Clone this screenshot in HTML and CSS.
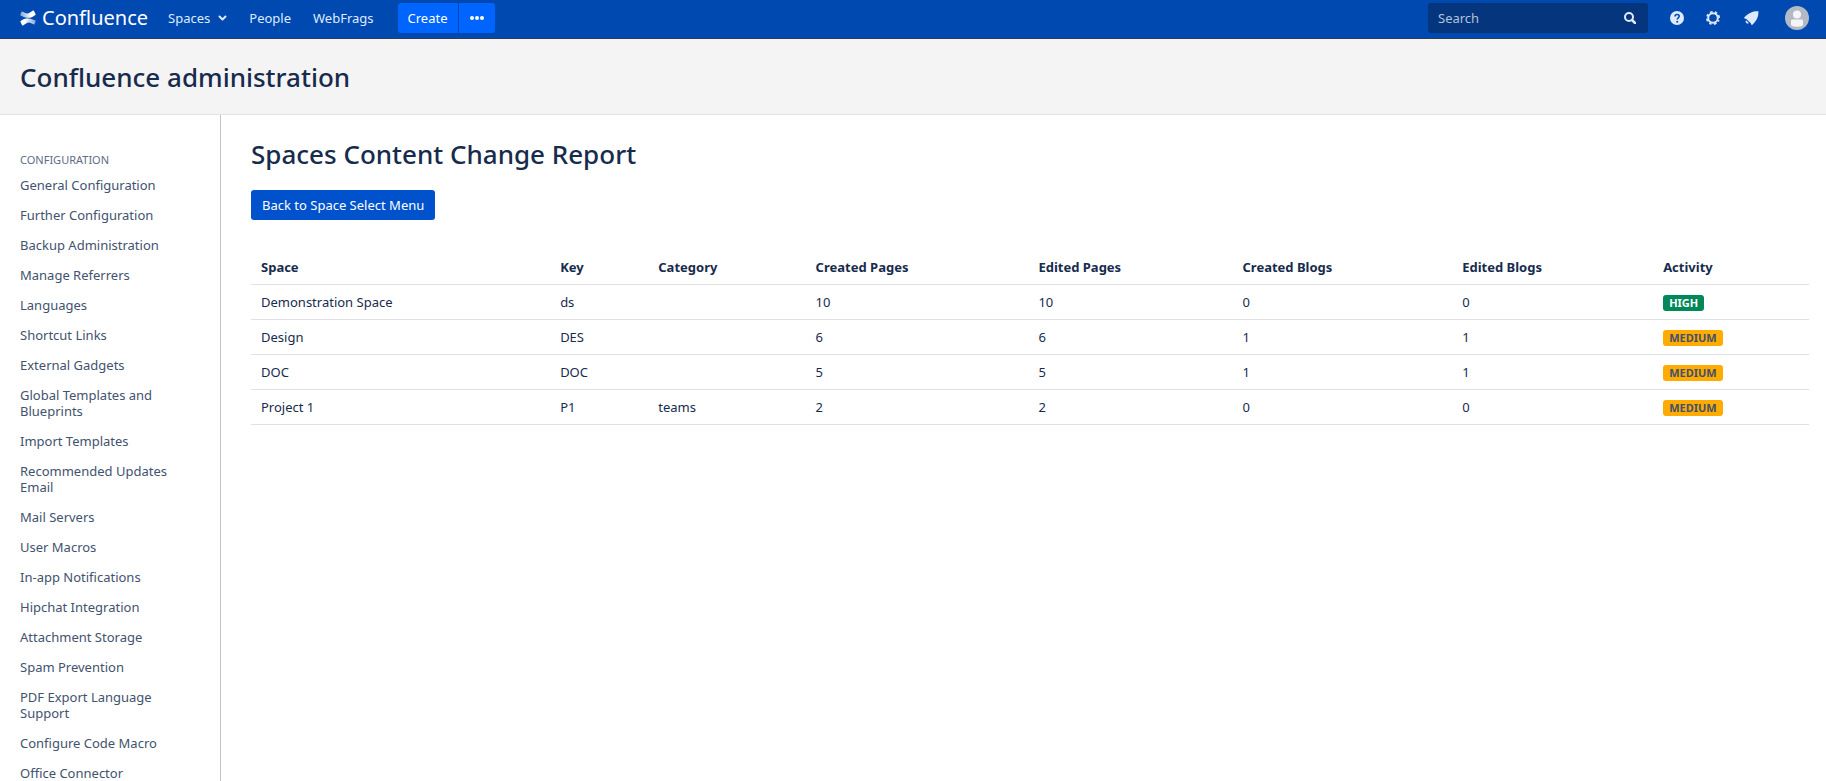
FILE: index.html
```html
<!DOCTYPE html>
<html lang="en">
<head>
    <meta charset="UTF-8">
    <meta name="viewport" content="width=device-width, initial-scale=1.0">
    <title>Spaces Content Change Report - Confluence</title>
    <link rel="stylesheet" href="styles.css">
</head>
<body>
    <header id="header">
        <a class="logo" href="#">
            <svg width="16" height="16" viewBox="0 0 16 16" aria-hidden="true">
                <defs>
                    <linearGradient id="top" x1="1" x2="0"><stop offset="0.3" stop-color="#fff"/><stop offset="1" stop-color="#fff" stop-opacity="0.5"/></linearGradient>
                    <linearGradient id="bottom" x1="0" x2="1"><stop offset="0.3" stop-color="#fff"/><stop offset="1" stop-color="#fff" stop-opacity="0.5"/></linearGradient>
                </defs>
                <path fill="url(#top)" d="M15.6 4.2 13.9.8c-.2-.3-.5-.4-.8-.3C10.500 1.800 8.500 4 6 3.300L2.200 1.600c-.3-.1-.6 0-.8.3L.3 4.800c-.1.300 0 .6.300.7 5 2.400 9.500 4 14.700-.5.300-.2.400-.5.300-.8z"/>
                <path fill="url(#bottom)" d="M.4 11.800l1.700 3.400c.2.300.5.400.8.300C5.500 14.200 7.500 12 10 12.700l3.800 1.700c.3.100.6 0 .8-.3l1.100-2.900c.1-.3 0-.6-.3-.7-5-2.400-9.500-4-14.700.5-.3.200-.4.500-.3.800z"/>
            </svg>
            <span>Confluence</span>
        </a>
        <nav class="main-nav">
            <a href="#">Spaces
                <svg width="9" height="7" viewBox="0 0 9 7" aria-hidden="true"><path d="M1.500 1.500l3 3 3-3" fill="none" stroke="currentColor" stroke-width="2" stroke-linecap="round" stroke-linejoin="round"/></svg>
            </a>
            <a href="#">People</a>
            <a href="#">WebFrags</a>
        </nav>
        <div class="create-group">
            <button type="button" class="create">Create</button>
            <button type="button" class="create-more" aria-label="Create from template">
                <svg width="14" height="4" viewBox="0 0 14 4" aria-hidden="true"><g fill="currentColor"><circle cx="2" cy="2" r="2"/><circle cx="7" cy="2" r="2"/><circle cx="12" cy="2" r="2"/></g></svg>
            </button>
        </div>
        <form class="search">
            <input type="search" placeholder="Search" aria-label="Search">
            <button type="button" aria-label="Submit search">
                <svg width="12" height="12" viewBox="0 0 12 12" aria-hidden="true"><circle cx="5" cy="5" r="4" fill="none" stroke="currentColor" stroke-width="2"/><path d="M8 8l3 3" stroke="currentColor" stroke-width="2.500" stroke-linecap="round"/></svg>
            </button>
        </form>
        <div class="tools">
            <button type="button" aria-label="Help">
                <svg width="14" height="14" viewBox="0 0 14 14" aria-hidden="true"><circle cx="7" cy="7" r="7" fill="currentColor"/><path d="M5 5.500C5 2.800 9.200 2.900 9.200 5.300 9.200 6.900 7.200 6.800 7.200 8.600" fill="none" stroke="#0049b0" stroke-width="1.600"/><circle cx="7.200" cy="10.700" r="1" fill="#0049b0"/></svg>
            </button>
            <button type="button" aria-label="Administration">
                <svg width="14" height="14" viewBox="0 0 14 14" aria-hidden="true"><circle cx="7" cy="7" r="4.800" fill="none" stroke="currentColor" stroke-width="2"/><circle cx="7" cy="7" r="6.200" fill="none" stroke="currentColor" stroke-width="1.600" stroke-dasharray="2.600 2.270" stroke-dashoffset="1.300" transform="rotate(22.500 7 7)"/></svg>
            </button>
            <button type="button" class="notifications" aria-label="Notifications">
                <svg width="15" height="14" viewBox="0 0 15 14" aria-hidden="true"><path fill="currentColor" d="M14 .3C8.500.2 5 2 .400 6.300c-.4.400-.3.800.2 1.100l1.700.7 4.300 4 .7 1.500c.3.500.7.500 1.100.1C12.800 9.300 14.500 6 14.400.7c0-.3-.1-.4-.4-.4z"/><path fill="currentColor" d="M2 9.200l2.900 2.700c-.8.900-1.800.900-2.500.2-.8-.7-1-1.900-.4-2.900z"/></svg>
            </button>
            <button type="button" class="profile" aria-label="User profile">
                <svg width="24" height="24" viewBox="0 0 24 24" aria-hidden="true"><circle cx="12" cy="12" r="12" fill="#b3bac5"/><circle cx="12" cy="8.500" r="4" fill="#f4f5f7"/><path fill="#f4f5f7" d="M6 15c0-1 .6-1.500 1.500-1.500h9c.9 0 1.500.5 1.500 1.500v3.500c0 3-12 3-12 0z"/></svg>
            </button>
        </div>
    </header>

    <div class="page-header">
        <h1>Confluence administration</h1>
    </div>

    <div class="page">
        <nav class="sidebar">
            <h2>Configuration</h2>
            <ul>
                <li><a href="#">General Configuration</a></li>
                <li><a href="#">Further Configuration</a></li>
                <li><a href="#">Backup Administration</a></li>
                <li><a href="#">Manage Referrers</a></li>
                <li><a href="#">Languages</a></li>
                <li><a href="#">Shortcut Links</a></li>
                <li><a href="#">External Gadgets</a></li>
                <li><a href="#">Global Templates and Blueprints</a></li>
                <li><a href="#">Import Templates</a></li>
                <li><a href="#">Recommended Updates Email</a></li>
                <li><a href="#">Mail Servers</a></li>
                <li><a href="#">User Macros</a></li>
                <li><a href="#">In-app Notifications</a></li>
                <li><a href="#">Hipchat Integration</a></li>
                <li><a href="#">Attachment Storage</a></li>
                <li><a href="#">Spam Prevention</a></li>
                <li><a href="#">PDF Export Language Support</a></li>
                <li><a href="#">Configure Code Macro</a></li>
                <li><a href="#">Office Connector</a></li>
            </ul>
        </nav>

        <main class="content">
            <h1>Spaces Content Change Report</h1>
            <button type="button" class="back">Back to Space Select Menu</button>
            <table class="report">
                <colgroup>
                    <col class="col-space">
                    <col class="col-key">
                    <col class="col-category">
                    <col class="col-created-pages">
                    <col class="col-edited-pages">
                    <col class="col-created-blogs">
                    <col class="col-edited-blogs">
                    <col>
                </colgroup>
                <thead>
                    <tr>
                        <th>Space</th>
                        <th>Key</th>
                        <th>Category</th>
                        <th>Created Pages</th>
                        <th>Edited Pages</th>
                        <th>Created Blogs</th>
                        <th>Edited Blogs</th>
                        <th>Activity</th>
                    </tr>
                </thead>
                <tbody>
                    <tr>
                        <td>Demonstration Space</td>
                        <td>ds</td>
                        <td></td>
                        <td>10</td>
                        <td>10</td>
                        <td>0</td>
                        <td>0</td>
                        <td><span class="lozenge high">High</span></td>
                    </tr>
                    <tr>
                        <td>Design</td>
                        <td>DES</td>
                        <td></td>
                        <td>6</td>
                        <td>6</td>
                        <td>1</td>
                        <td>1</td>
                        <td><span class="lozenge medium">Medium</span></td>
                    </tr>
                    <tr>
                        <td>DOC</td>
                        <td>DOC</td>
                        <td></td>
                        <td>5</td>
                        <td>5</td>
                        <td>1</td>
                        <td>1</td>
                        <td><span class="lozenge medium">Medium</span></td>
                    </tr>
                    <tr>
                        <td>Project 1</td>
                        <td>P1</td>
                        <td>teams</td>
                        <td>2</td>
                        <td>2</td>
                        <td>0</td>
                        <td>0</td>
                        <td><span class="lozenge medium">Medium</span></td>
                    </tr>
                </tbody>
            </table>
        </main>
    </div>
</body>
</html>
```
FILE: styles.css
```css
* {
    box-sizing: border-box;
}

body {
    margin: 0;
    font-family: "Noto Sans", "Open Sans", sans-serif;
    font-size: 13px;
    line-height: 20px;
    color: #172b4d;
    background: #fff;
    height: 100vh;
    overflow: hidden;
    display: flex;
    flex-direction: column;
}

button,
input {
    font: inherit;
}

a {
    text-decoration: none;
}

/* top bar */
#header {
    display: flex;
    align-items: center;
    flex-shrink: 0;
    padding: 3px 17px 5px 20px;
    background: #0049b0;
    border-bottom: 1px solid #2e3d54;
    color: #deebff;
}

.logo {
    display: flex;
    align-items: center;
    gap: 6px;
    margin-right: 20px;
    color: #fff;
    font-size: 20px;
    line-height: 30px;
}

.main-nav {
    display: flex;
    gap: 22px;
}

.main-nav a {
    display: flex;
    align-items: center;
    gap: 8px;
    color: #deebff;
}

.create-group {
    display: flex;
    gap: 1px;
    margin-left: 24px;
}

.create-group button {
    display: flex;
    align-items: center;
    justify-content: center;
    height: 30px;
    padding: 0 10px;
    border: 0;
    background: #0065ff;
    color: #fff;
}

.create-group .create {
    border-radius: 3px 0 0 3px;
}

.create-group .create-more {
    padding: 0 11px;
    border-radius: 0 3px 3px 0;
}

.search {
    display: flex;
    align-items: center;
    width: 220px;
    height: 30px;
    margin-left: auto;
    border-radius: 3px;
    background: #05357c;
}

.search input {
    flex: 1;
    min-width: 0;
    padding: 0 10px;
    border: 0;
    outline: 0;
    background: transparent;
    color: #deebff;
}

.search input::placeholder {
    color: #b1c3df;
    opacity: 1;
}

.search button,
.tools button {
    display: flex;
    padding: 0;
    border: 0;
    background: transparent;
    color: #deebff;
}

.search button {
    margin-right: 12px;
}

.tools {
    display: flex;
    align-items: center;
    gap: 22px;
    margin-left: 22px;
}

.tools .notifications {
    margin: 0 4px 0 2px;
}

/* page title */
.page-header {
    flex-shrink: 0;
    padding: 20px 20px 19px;
    background: #f4f4f4;
    border-bottom: 1px solid #dfe1e6;
}

h1 {
    margin: 0;
    font-size: 26px;
    font-weight: 500;
    line-height: 36px;
}

.page {
    display: flex;
    flex: 1;
    min-height: 0;
}

/* admin menu */
.sidebar {
    width: 221px;
    flex-shrink: 0;
    padding: 35px 20px 0;
    border-right: 1px solid #c1c3c8;
    overflow: hidden;
}

.sidebar h2 {
    margin: 0;
    color: #5e6c84;
    font-size: 11px;
    font-weight: 400;
    line-height: 20px;
    text-transform: uppercase;
}

.sidebar ul {
    margin: 0;
    padding: 0;
    list-style: none;
}

.sidebar a {
    display: block;
    padding: 7px 0;
    color: #42526e;
    line-height: 16px;
}

/* report */
.content {
    flex: 1;
    min-width: 0;
    padding: 21px 17px 20px 30px;
}

.back {
    display: block;
    height: 30px;
    margin: 18px 0 30px;
    padding: 0 11px;
    border: 0;
    border-radius: 3px;
    background: #0052cc;
    color: #fff;
}

.report {
    width: 100%;
    table-layout: fixed;
    border-collapse: collapse;
}

.report th,
.report td {
    padding: 7px 10px;
    border-bottom: 1px solid #dfe1e6;
    text-align: left;
    vertical-align: top;
}

.report th {
    font-weight: 700;
}

.col-space { width: 19.2%; }
.col-key { width: 6.3%; }
.col-category { width: 10.1%; }
.col-created-pages { width: 14.3%; }
.col-edited-pages { width: 13.1%; }
.col-created-blogs { width: 14.1%; }
.col-edited-blogs { width: 12.9%; }

.lozenge {
    display: inline-block;
    padding: 0 6px;
    border-radius: 3px;
    font-size: 11px;
    font-weight: 700;
    line-height: 16px;
    text-transform: uppercase;
}

.high {
    background: #00875a;
    color: #fff;
}

.medium {
    background: #ffab00;
    color: #42526e;
}
```
